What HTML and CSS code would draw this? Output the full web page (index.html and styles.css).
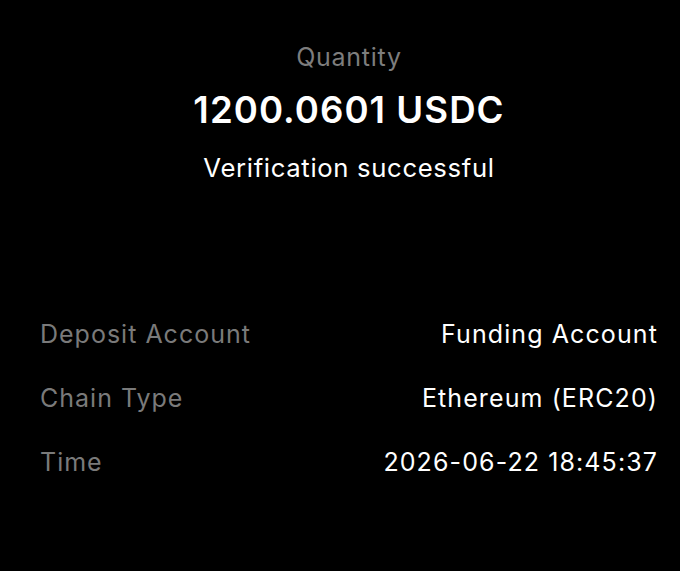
FILE: index.html
```html
<!DOCTYPE html>
<html>
<head>
<meta charset="utf-8">
<link rel="stylesheet" href="styles.css">
</head>
<body>
<main class="screen">
  <section class="summary">
    <div class="label">Quantity</div>
    <div class="amount">1200.0601 USDC</div>
    <div class="status">Verification successful</div>
  </section>
  <section class="details">
    <div class="row"><span class="key">Deposit Account</span><span class="val">Funding Account</span></div>
    <div class="row"><span class="key">Chain Type</span><span class="val">Ethereum (ERC20)</span></div>
    <div class="row"><span class="key">Time</span><span class="val">2026-06-22 18:45:37</span></div>
  </section>
</main>
</body>
</html>
```
FILE: styles.css
```css
html, body {
  margin: 0;
  padding: 0;
  background: #000;
}
body {
  font-family: Inter, "Noto Sans", sans-serif;
  width: 680px;
  height: 571px;
  overflow: hidden;
}
.screen {
  display: flex;
  flex-direction: column;
  padding: 0 22px 0 40px;
}
.summary {
  display: flex;
  flex-direction: column;
  align-items: center;
  padding-top: 40px;
}
.label {
  color: #7d7d7d;
  font-size: 25px;
  letter-spacing: 0.75px;
  line-height: 34px;
}
.amount {
  color: #fff;
  font-size: 36.6px;
  font-weight: 600;
  letter-spacing: 1.05px;
  line-height: 44px;
  margin-top: 14px;
}
.status {
  color: #fff;
  font-size: 25.7px;
  letter-spacing: 0.65px;
  line-height: 34px;
  margin-top: 19px;
}
.details {
  display: flex;
  flex-direction: column;
  margin-top: 132px;
  gap: 30px;
}
.row {
  display: flex;
  justify-content: space-between;
  font-size: 25px;
  line-height: 34px;
}
.key { color: #7a7a7a; letter-spacing: 1px; }
.val { color: #fff; letter-spacing: 1.1px; }
```
